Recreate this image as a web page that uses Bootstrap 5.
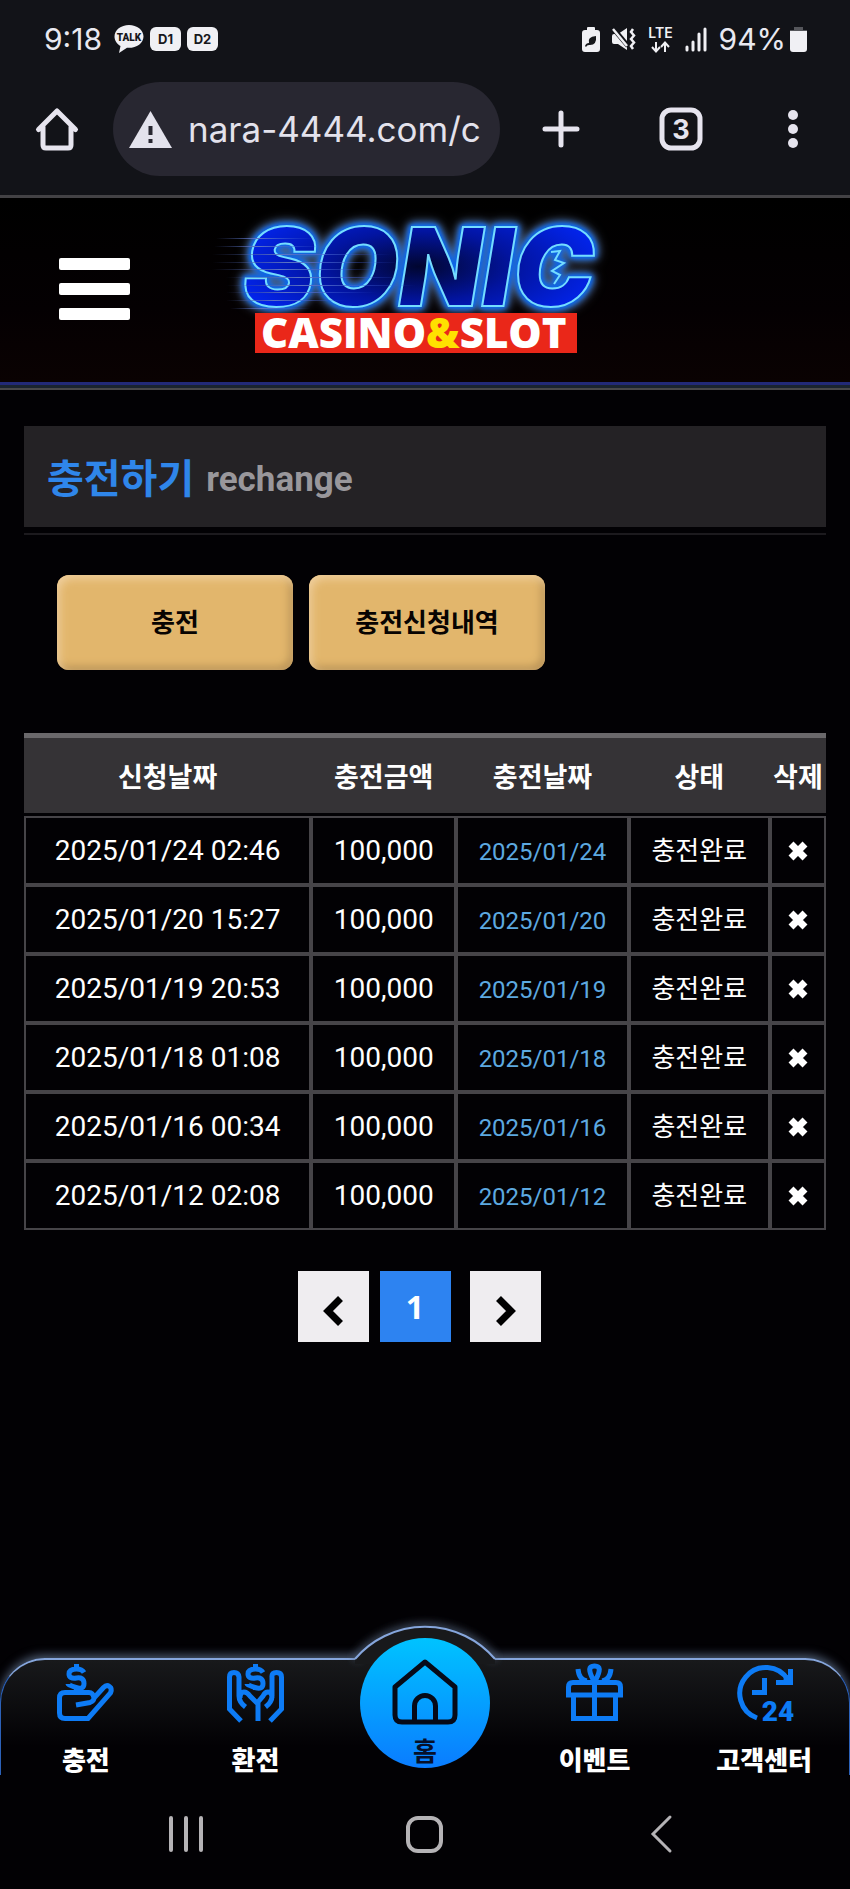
<!DOCTYPE html>
<html lang="ko">
<head>
<meta charset="utf-8">
<meta name="viewport" content="width=device-width, initial-scale=1">
<title>충전하기</title>
<link href="https://cdn.jsdelivr.net/npm/bootstrap@5.3.0/dist/css/bootstrap.min.css" rel="stylesheet">
<style>
  body { background: #020104; color: #fff; font-family: Roboto, "Noto Sans CJK KR", sans-serif; font-size: 26px; line-height: 40px; }
  svg { display: block; flex: none; overflow: visible; }
  button { color: inherit; }
  .plain-btn { background: none; border: 0; padding: 0; display: block; }

  /* phone status bar and browser toolbar */
  .phone-top { background: #121318; color: #e9e9f1; border-bottom: 3px solid #434245; font-family: Inter, sans-serif; }
  .status-row { height: 82px; padding: 0 43px 4px 44px; font-size: 30px; }
  .status-left { gap: 6px; }
  .status-left svg { margin-left: 6px; }
  .sim-tag { background: #f0f0f4; color: #17181c; width: 31px; height: 24px; border-radius: 6px; font-size: 13px; line-height: 24px; font-weight: 700; text-align: center; }
  .status-right { gap: 12px; }
  .tool-row { padding: 0 52px 19px 36px; }
  .tool-gap { gap: 80px; }
  .url-pill { background: #282731; border-radius: 47px; height: 94px; margin: 0 43px 0 35px; padding: 0 14px 0 16px; }
  .url-pill input { background: none; border: 0; outline: 0; color: #e3e2ec; font-size: 35px; width: 100%; min-width: 0; padding: 0; }

  /* site header */
  .site-head { background: linear-gradient(#000, #040002 60%, #0a0202); height: 184px; padding: 0 0 2px 59px; gap: 80px; }
  .head-rule { height: 8px; background: linear-gradient(#222a78 0 3px, #1a2430 3px 6px, #49484a 6px); }
  .sonic-word { font: italic 900 108px Inter, sans-serif; filter: drop-shadow(0 0 2px #0d6af0) drop-shadow(0 0 2px #0d62e0) drop-shadow(0 0 3px #0d62e0) drop-shadow(0 0 5px #6d7f9c); }
  .slot-word { font: 800 42px "Open Sans", sans-serif; }

  .page-body { padding: 36px 24px 0; }
  .title-bar { background: #242225; height: 101px; padding: 6px 0 0 23px; gap: 12px; }
  .title-bar h1 { color: #2f86ea; font-size: 40px; font-weight: 700; line-height: 56px; margin: 0; }
  .title-bar span { color: #99979b; font-size: 35px; font-weight: 700; line-height: 56px; }
  .title-rule { height: 2px; background: #1c1a1e; margin-top: 6px; }

  .tab-btn { width: 236px; height: 95px; border: 0; border-radius: 12px; background: #e2b66c; color: #080402; font-size: 26px; font-weight: 700;
    box-shadow: inset 3px 4px 8px #f0cf9c, inset -3px -3px 8px #b38d52; }
  .tab-row { margin: 40px 0 63px 33px; gap: 16px; }

  .log-table { width: 100%; table-layout: fixed; border-collapse: separate; border-spacing: 0; text-align: center; font-size: 28px; white-space: nowrap; }
  .log-table th { background: #353336; border-top: 5px solid #6a686b; border-bottom: 3px solid #020104; height: 83px; padding: 5px 0 0; font-size: 27px; font-weight: 700; }
  .log-table td { border: 2px solid #464448; padding: 13px 0 12px; vertical-align: baseline; line-height: 40px; }
  .log-table .paid-day { color: #5da9e0; font-size: 24px; line-height: 24px; }
  .log-table .state { font-size: 26px; line-height: 26px; }
  .log-table td:last-child { vertical-align: middle; }

  .pager { gap: 11px; margin-top: 41px; padding-right: 12px; }
  .pager button { width: 71px; height: 71px; border: 0; background: #efedf0; color: #000; font: 700 32px "Open Sans", sans-serif; }
  .pager button.now { background: #2d83f1; color: #fff; margin-right: 8px; }

  /* bottom menu */
  .dock { height: 117px; border: 1px solid #2c61b8; border-top: 2px solid #86a6dc; border-bottom: 0; border-radius: 45px 45px 0 0;
    background: linear-gradient(#18191b, #020104 75%); box-shadow: 0 -3px 10px #4c5a70; }
  .dock-item { flex: 1 1 0; padding-top: 4px; color: #fff; font-size: 26px; font-weight: 900; line-height: 38px; text-decoration: none; }
  .dock-item svg { margin-bottom: 21px; }
  .dock-hump { position: absolute; left: 50%; top: -34px; margin-left: -70px; }
  .home-disc { position: absolute; left: 50%; top: -22px; margin-left: -65px; width: 130px; height: 130px; border-radius: 50%; padding-top: 21px;
    background: linear-gradient(#00c3ff, #0a7cff); color: #06102a; font-size: 26px; font-weight: 700; line-height: 38px; text-decoration: none; }
  .home-disc svg { margin-bottom: 8px; }
  .sys-row { background: #020104; height: 114px; padding: 4px 178px 0 169px; }
</style>
</head>
<body class="d-flex flex-column min-vh-100">

<header class="phone-top">
  <div class="status-row d-flex align-items-center">
    <div class="status-left d-flex align-items-center">
      <span>9:18</span>
      <svg width="30" height="28" viewBox="0 0 30 28"><path d="M15 0C7 0 .5 5 .5 11.500c0 4 2.500 7.500 6 9.500L5 28l8-5.200c9 .7 16.500-4.300 16.500-11.300C29.500 5 23 0 15 0z" fill="#f0f0f4"/><text x="15" y="16" text-anchor="middle" font-family="Roboto" font-weight="900" font-size="10" fill="#17181c">TALK</text></svg>
      <span class="sim-tag">D1</span>
      <span class="sim-tag">D2</span>
    </div>
    <div class="status-right d-flex align-items-center ms-auto">
      <svg width="18" height="25" viewBox="0 0 18 25"><path d="M5 3V1q0-1 1-1h6q1 0 1 1v2h2q3 0 3 3v16q0 3-3 3H3q-3 0-3-3V6q0-3 3-3z" fill="#f0f0f4"/><path d="M3 19q1-3 4-3-2-6 7-7 1 9-6 9-3-.5-4 2z" fill="#17181c"/></svg>
      <svg width="24" height="25" viewBox="0 0 24 25"><path d="M0 9q0-2 2-2h4L15 1v22L6 17H2q-2 0-2-2z" fill="#f0f0f4"/><path d="M0 0l16 19" stroke="#121318" stroke-width="5"/><path d="M1 2l14 17" stroke="#f0f0f4" stroke-width="2.500"/><path d="M21 2l-2 3 3 3.500-3 3.500 3 3.500-3 3.500 2 3" fill="none" stroke="#f0f0f4" stroke-width="2.500"/></svg>
      <svg width="25" height="27" viewBox="0 0 25 27"><text x="12.500" y="12" text-anchor="middle" font-family="Inter" font-weight="600" font-size="14" fill="#f0f0f4">LTE</text><path d="M8 16v9M4 21l4 4.500 4-4.500M17 26v-9M13 21l4-4.500 4 4.500" fill="none" stroke="#f0f0f4" stroke-width="2"/></svg>
      <svg width="22" height="25" viewBox="0 0 22 25"><path d="M2 23v-3M8 23v-8M14 23V7M20 23V2" stroke="#f0f0f4" stroke-width="3" stroke-linecap="round"/></svg>
      <span class="d-flex align-items-center gap-1">94%<svg width="17" height="25" viewBox="0 0 17 25"><path d="M4 3V0h9v3h4v4H0V3z" fill="#55565b"/><path d="M0 4h17v18q0 3-3 3H3q-3 0-3-3z" fill="#f0f0f4"/></svg></span>
    </div>
  </div>
  <div class="tool-row d-flex align-items-center">
    <button class="plain-btn" type="button" aria-label="홈페이지"><svg width="42" height="42" viewBox="0 0 42 42" fill="none" stroke="#e6e4ee" stroke-width="5" stroke-linecap="round" stroke-linejoin="round"><path d="M2.500 21.500L21 3l18.500 18.500M7 19v18q0 3 3 3h22q3 0 3-3V19"/></svg></button>
    <label class="url-pill d-flex align-items-center flex-grow-1">
      <svg width="43" height="37" viewBox="0 0 43 37"><path d="M21.500 0L43 37H0z" fill="#e3e2ec"/><path d="M21.500 15v9M21.500 28v4" stroke="#282731" stroke-width="4"/></svg>
      <input class="ms-3" type="text" value="nara-4444.com/c" aria-label="주소">
    </label>
    <div class="tool-gap d-flex align-items-center">
      <button class="plain-btn" type="button" aria-label="새 탭"><svg width="37" height="38" viewBox="0 0 37 38" stroke="#e6e4ee" stroke-width="5" stroke-linecap="round"><path d="M18 3v32M2 19h32"/></svg></button>
      <button class="plain-btn" type="button" aria-label="탭 3개"><svg width="42" height="42" viewBox="0 0 42 42"><rect x="2" y="2" width="38" height="38" rx="9" fill="none" stroke="#e6e4ee" stroke-width="5"/><text x="21" y="31" text-anchor="middle" font-family="Inter" font-weight="700" font-size="27" fill="#e6e4ee">3</text></svg></button>
      <button class="plain-btn" type="button" aria-label="메뉴"><svg width="16" height="38" viewBox="0 0 16 38" fill="#e6e4ee"><circle cx="11" cy="5" r="5"/><circle cx="11" cy="19" r="5"/><circle cx="11" cy="33" r="5"/></svg></button>
    </div>
  </div>
</header>

<div class="site-head d-flex align-items-center">
  <button class="plain-btn" type="button" aria-label="전체 메뉴"><svg width="71" height="62" viewBox="0 0 71 62" fill="#fff"><rect width="71" height="12" rx="2"/><rect y="25" width="71" height="12" rx="2"/><rect y="50" width="71" height="12" rx="2"/></svg></button>
  <a href="#" aria-label="Sonic Casino &amp; Slot"><svg width="410" height="150" viewBox="0 0 410 150">
    <defs>
      <radialGradient id="ink" cx=".5" cy=".5" r=".6"><stop offset="0" stop-color="#010630"/><stop offset=".45" stop-color="#0214a0"/><stop offset="1" stop-color="#0228ff"/></radialGradient>
      <linearGradient id="dash"><stop offset="0" stop-color="#3d4f8c" stop-opacity="0"/><stop offset=".4" stop-color="#5d74c4"/><stop offset="1" stop-color="#2c4fd8" stop-opacity="0"/></linearGradient>
    </defs>
    <g class="sonic-word">
      <text x="33" y="92" fill="url(#ink)" stroke="#74dcff" stroke-width="2">SONIC</text>
      <path d="M341 38L350 37 345 46 354 49 342 57 350 61 344 70" fill="none" stroke="#74dcff" stroke-width="2"/>
    </g>
    <g fill="url(#dash)"><rect x="6" y="24" width="100" height="1"/><rect x="4" y="32" width="110" height="1"/><rect x="2" y="40" width="180" height="1"/><rect x="2" y="48" width="190" height="1"/><rect x="2" y="55" width="170" height="1"/><rect x="16" y="63" width="180" height="1"/><rect x="16" y="71" width="190" height="1"/><rect x="16" y="78" width="150" height="1"/><rect x="16" y="86" width="120" height="1"/><rect x="20" y="94" width="80" height="1"/></g>
    <rect x="45" y="99" width="322" height="40" fill="#ea2719"/>
    <text class="slot-word" x="51" y="134" fill="#fff">CASINO<tspan fill="#ffe100">&amp;</tspan>SLOT</text>
  </svg></a>
</div>
<div class="head-rule"></div>

<main class="page-body flex-grow-1">
  <div class="title-bar d-flex align-items-center"><h1>충전하기</h1><span>rechange</span></div>
  <div class="title-rule"></div>

  <div class="tab-row d-flex">
    <button class="tab-btn" type="button">충전</button>
    <button class="tab-btn" type="button">충전신청내역</button>
  </div>

  <table class="log-table">
    <colgroup><col style="width:35.8%"><col style="width:18.1%"><col style="width:21.5%"><col style="width:17.6%"><col style="width:7%"></colgroup>
    <thead><tr><th>신청날짜</th><th>충전금액</th><th>충전날짜</th><th>상태</th><th>삭제</th></tr></thead>
    <tbody id="log"></tbody>
  </table>

  <nav class="pager d-flex justify-content-center" aria-label="페이지">
    <button type="button" aria-label="이전"><svg class="mx-auto mt-2" width="19" height="30" viewBox="0 0 19 30"><path d="M16.500 2.500L4 15l12.500 12.500" fill="none" stroke="#000" stroke-width="7"/></svg></button>
    <button type="button" class="now">1</button>
    <button type="button" aria-label="다음"><svg class="mx-auto mt-2" width="19" height="30" viewBox="0 0 19 30"><path d="M2.500 2.500L15 15 2.500 27.500" fill="none" stroke="#000" stroke-width="7"/></svg></button>
  </nav>
</main>

<nav class="dock d-flex position-relative" aria-label="하단 메뉴">
  <a class="dock-item d-flex flex-column align-items-center" href="#">
    <svg width="57" height="57" viewBox="0 0 57 57" fill="none" stroke="#0d7bf5" stroke-width="5"><path d="M27 8.500Q25 5 19.500 5 12 5 12 10t7.500 4 7.500 5.500-8 4-8-3.500M19.500 0v5M19.500 23v6"/><path d="M19 41l14-2.500Q37 37 37 34l9.500-10.500q3-3 6-1t1 6.500L31 54.500H8Q2.500 54.500 2.500 49V34q0-5.500 5.500-5.500h24q4 0 5 5.500"/></svg>충전</a>
  <a class="dock-item d-flex flex-column align-items-center" href="#">
    <svg width="57" height="57" viewBox="0 0 57 57" fill="none" stroke="#0d7bf5" stroke-width="5"><path d="M36 8.500Q34 5 28.500 5 21 5 21 10t7.500 4 7.500 5.500-8 4-8-3.500M28.500 0v5M28.500 22v4"/><path d="M14 57L2.500 45V13q0-4.500 4.500-4.500t5 4.500v19q0 6 6.500 11M13 34q0-6 4-6 3 0 6 4l8 8v17M43 57l11.500-12V13q0-4.500-5-4.500T45 13v19q0 6-6.500 11M45 34q0-6-4-6-3 0-5 4l-5 6"/></svg>환전</a>
  <span class="dock-item"></span>
  <a class="dock-item d-flex flex-column align-items-center" href="#">
    <svg width="57" height="57" viewBox="0 0 57 57" fill="none" stroke="#0d7bf5" stroke-width="5"><path d="M2.500 31V23q0-4.500 4.500-4.500h43q4.500 0 4.500 4.500v8zM7.500 31v23.500h42V31M28.500 17v38M28.500 18q-8-14-2.500-15.500 2.500-1 5 0Q36.500 4 28.500 18zM12 5q1 11 9 12M45 5q-1 11-9 12"/></svg>이벤트</a>
  <a class="dock-item d-flex flex-column align-items-center" href="#">
    <svg width="57" height="57" viewBox="0 0 57 57" fill="none" stroke="#0d7bf5" stroke-width="5"><path d="M21 54A26 26 0 1 1 52 16M54.500 5v13.500H40M28.500 14v14.500H16"/><path d="M48 12l8-2v10h-9z" fill="#0d7bf5" stroke="none"/><text x="42" y="57" text-anchor="middle" font-family="Roboto" font-weight="900" font-size="28" fill="#0d7bf5" stroke="none">24</text></svg>고객센터</a>
  <svg class="dock-hump" width="140" height="38" viewBox="0 0 140 38">
    <defs><filter id="halo" x="-20%" y="-60%" width="140%" height="200%"><feGaussianBlur stdDeviation="4"/></filter></defs>
    <path d="M0 33A92 92 0 0 1 140 33" fill="none" stroke="#4c5a70" stroke-width="6" filter="url(#halo)"/>
    <path d="M0 33A92 92 0 0 1 140 33V38H0z" fill="#18191b"/>
    <path d="M0 33A92 92 0 0 1 140 33" fill="none" stroke="#86a6dc" stroke-width="2"/>
  </svg>
  <a class="home-disc d-flex flex-column align-items-center" href="#">
    <svg width="66" height="66" viewBox="0 0 66 66" fill="none" stroke="#060a18" stroke-width="5" stroke-linejoin="round"><path d="M3 28L33 3l30 25v28q0 7-7 7H10q-7 0-7-7zM22.500 63V47a10.500 10.500 0 0 1 21 0v16"/></svg>홈</a>
</nav>

<footer class="sys-row d-flex align-items-center justify-content-between position-relative">
  <button class="plain-btn" type="button" aria-label="최근 앱"><svg width="34" height="36" viewBox="0 0 34 36"><path d="M2 2v32M17 2v32M32 2v32" stroke="#b5b3b6" stroke-width="4" stroke-linecap="round"/></svg></button>
  <button class="plain-btn" type="button" aria-label="홈 화면"><svg width="37" height="37" viewBox="0 0 37 37"><rect x="2" y="2" width="33" height="33" rx="10" fill="none" stroke="#b5b3b6" stroke-width="4"/></svg></button>
  <button class="plain-btn" type="button" aria-label="뒤로"><svg width="26" height="38" viewBox="0 0 26 38"><path d="M24 2L7 19l17 17" fill="none" stroke="#b5b3b6" stroke-width="3" stroke-linecap="round"/></svg></button>
</footer>

<script>
  const rows = [["2025/01/24", "02:46"], ["2025/01/20", "15:27"], ["2025/01/19", "20:53"], ["2025/01/18", "01:08"], ["2025/01/16", "00:34"], ["2025/01/12", "02:08"]];
  document.getElementById("log").innerHTML = rows.map(([day, time]) => `<tr>
    <td>${day} ${time}</td><td>100,000</td><td><span class="paid-day">${day}</span></td><td><span class="state">충전완료</span></td>
    <td><button class="plain-btn mx-auto" type="button" aria-label="삭제"><svg width="20" height="20" viewBox="0 0 20 20"><path d="M3 3l14 14M17 3L3 17" stroke="#fff" stroke-width="7"/></svg></button></td></tr>`).join("");
</script>
<script src="https://cdn.jsdelivr.net/npm/bootstrap@5.3.0/dist/js/bootstrap.bundle.min.js"></script>
</body>
</html>
